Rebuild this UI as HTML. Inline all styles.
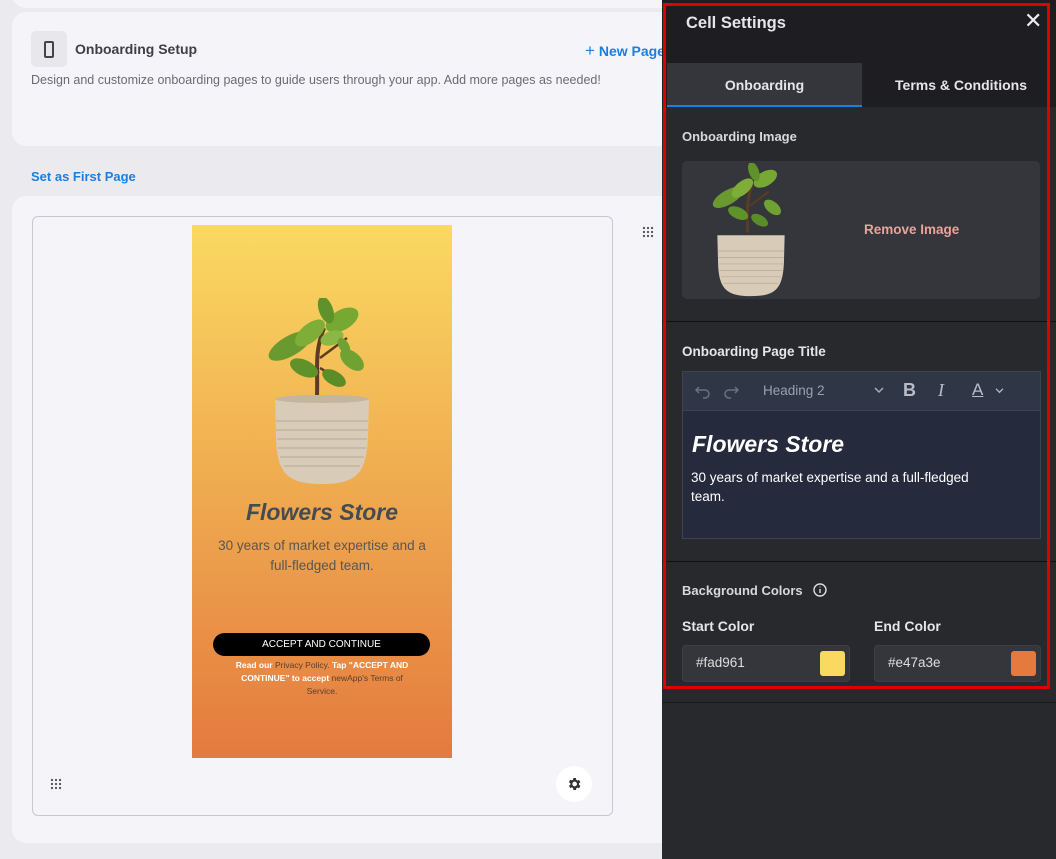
<!DOCTYPE html>
<html><head><meta charset="utf-8"><style>
*{box-sizing:border-box;margin:0;padding:0}
body{width:1056px;height:859px;overflow:hidden;background:#ebeaef;font-family:"Liberation Sans",sans-serif;position:relative}
.abs{position:absolute}
.card{position:absolute;background:#f5f4f9;border-radius:14px}
.panel{position:absolute;left:662px;top:0;width:394px;height:859px;background:#28292c}
.w{color:#e6e6e8;font-weight:bold}
</style></head><body>
<div class="card" style="left:12px;top:-20px;width:700px;height:28px"></div>
<div class="card" style="left:12px;top:12px;width:700px;height:134px"></div>
<div class="abs" style="left:31px;top:31px;width:36px;height:36px;background:#e8e7ec;border-radius:5px"></div>
<div class="abs" style="left:44px;top:41px;width:10px;height:17px;border:2px solid #444;border-radius:2px"></div>
<div class="abs" style="left:75px;top:41px;font-size:14px;font-weight:bold;color:#3e3e44">Onboarding Setup</div>
<div class="abs" style="left:585px;top:41px;font-size:14px;font-weight:bold;color:#1a7fe0"><span style="font-weight:normal;font-size:17px">+</span> New Page</div>
<div class="abs" style="left:31px;top:73px;font-size:12.5px;color:#6b6b72">Design and customize onboarding pages to guide users through your app. Add more pages as needed!</div>
<div class="abs" style="left:31px;top:169px;font-size:13px;font-weight:bold;color:#1a7fe0">Set as First Page</div>
<div class="card" style="left:12px;top:196px;width:700px;height:647px"></div>
<div class="abs" style="left:32px;top:216px;width:581px;height:600px;border:1px solid #c9c8cf;border-radius:6px;background:#f5f4f9"></div>
<div class="abs" style="left:642px;top:226px;width:12px;height:12px;background:radial-gradient(circle,#555 1px,transparent 1.3px) 0 0/4px 4px"></div>
<div class="abs" style="left:50px;top:778px;width:12px;height:12px;background:radial-gradient(circle,#555 1px,transparent 1.3px) 0 0/4px 4px"></div>
<div class="abs" style="left:556px;top:766px;width:36px;height:36px;border-radius:50%;background:#fff"></div>
<svg class="abs" style="left:566px;top:776px" width="16" height="16" viewBox="0 0 24 24"><path fill="#333" d="M19.4 13a7.5 7.5 0 0 0 0-2l2.1-1.6-2-3.5-2.5 1a7.6 7.6 0 0 0-1.7-1L15 3h-4l-.4 2.6a7.6 7.6 0 0 0-1.7 1l-2.5-1-2 3.5L6.6 11a7.5 7.5 0 0 0 0 2l-2.1 1.6 2 3.5 2.5-1a7.6 7.6 0 0 0 1.7 1L11 21h4l.4-2.6a7.6 7.6 0 0 0 1.7-1l2.5 1 2-3.5zM13 15.5a3.5 3.5 0 1 1 0-7 3.5 3.5 0 0 1 0 7z"/></svg>
<!-- phone -->
<div class="abs" style="left:192px;top:225px;width:260px;height:533px;background:linear-gradient(#fad961,#e47a3e);text-align:center">
<svg class="abs" style="left:70px;top:73px" width="120" height="190" viewBox="0 0 120 190">
<path d="M55 97 C56 70 52 55 62 30" stroke="#5a3d22" stroke-width="4" fill="none"/>
<path d="M58 60 L85 40M57 75 L40 62M58 70 L78 82" stroke="#5a3d22" stroke-width="2.5"/>
<ellipse cx="28" cy="48" rx="24" ry="10" transform="rotate(-30 28 48)" fill="#6a9a2f"/>
<ellipse cx="48" cy="35" rx="18" ry="9" transform="rotate(-40 48 35)" fill="#7fae38"/>
<ellipse cx="80" cy="22" rx="18" ry="10" transform="rotate(-30 80 22)" fill="#76a832"/>
<ellipse cx="64" cy="12" rx="7" ry="14" transform="rotate(-20 64 12)" fill="#5f922a"/>
<ellipse cx="70" cy="40" rx="12" ry="7" transform="rotate(-20 70 40)" fill="#8bb845"/>
<ellipse cx="42" cy="70" rx="15" ry="8" transform="rotate(25 42 70)" fill="#5f922a"/>
<ellipse cx="90" cy="62" rx="14" ry="8" transform="rotate(40 90 62)" fill="#6fa233"/>
<ellipse cx="72" cy="80" rx="13" ry="7" transform="rotate(30 72 80)" fill="#5a8c28"/>
<ellipse cx="82" cy="48" rx="5" ry="9" transform="rotate(-30 82 48)" fill="#6fa233"/>
<path d="M13 101 L107 101 L106 140 C104 175 95 186 60 186 C25 186 15 175 14 140 Z" fill="#d8cbb8"/>
<ellipse cx="60" cy="101" rx="47" ry="4" fill="#c4b59f"/>
<g stroke="#b8a990" stroke-width="1" fill="none"><path d="M14 123H106M14 132H106M15 141H105M16 150H104M18 159H102M22 168H98"/></g>
</svg>
<div class="abs" style="left:0;width:260px;top:274px;font-size:23px;font-weight:bold;font-style:italic;color:#444b52">Flowers Store</div>
<div class="abs" style="left:15px;width:230px;top:311px;font-size:13.5px;line-height:20px;color:#5a5550">30 years of market expertise and a full-fledged team.</div>
<div class="abs" style="left:21px;top:408px;width:217px;height:23px;background:#000;border-radius:12px;color:#fff;font-size:10px;line-height:23px">ACCEPT AND CONTINUE</div>
<div class="abs" style="left:35px;width:190px;top:434px;font-size:8.5px;line-height:13px;color:#5a4030"><b style="color:#fff">Read our</b> Privacy Policy. <b style="color:#fff">Tap "ACCEPT AND CONTINUE" to accept</b> newApp's Terms of Service.</div>
</div>
<!-- panel -->
<div class="panel">
<div class="abs" style="left:0;top:0;width:394px;height:107px;background:#1e1e22"></div>
<div class="abs w" style="left:24px;top:14px;font-size:16.5px">Cell Settings</div>
<div class="abs" style="left:362px;top:8px;font-size:22px;color:#eee">✕</div>
<div class="abs" style="left:5px;top:63px;width:195px;height:44px;background:#34363b;border-bottom:2px solid #1a7fe0"></div>
<div class="abs w" style="left:5px;width:195px;top:77px;text-align:center;font-size:14px">Onboarding</div>
<div class="abs w" style="left:200px;width:198px;top:77px;text-align:center;font-size:14px">Terms &amp; Conditions</div>
<div class="abs w" style="left:20px;top:129px;font-size:13px;color:#d8d8da">Onboarding Image</div>
<div class="abs" style="left:20px;top:161px;width:358px;height:138px;background:#35363b;border-radius:5px"></div>
<svg class="abs" style="left:44px;top:163px" width="90" height="136" viewBox="0 0 120 190">
<path d="M55 97 C56 70 52 55 62 30" stroke="#5a3d22" stroke-width="4" fill="none"/>
<path d="M58 60 L85 40M57 75 L40 62" stroke="#5a3d22" stroke-width="2.5"/>
<ellipse cx="28" cy="48" rx="24" ry="10" transform="rotate(-30 28 48)" fill="#6a9a2f"/>
<ellipse cx="48" cy="35" rx="18" ry="9" transform="rotate(-40 48 35)" fill="#7fae38"/>
<ellipse cx="80" cy="22" rx="18" ry="10" transform="rotate(-30 80 22)" fill="#76a832"/>
<ellipse cx="64" cy="12" rx="7" ry="14" transform="rotate(-20 64 12)" fill="#5f922a"/>
<ellipse cx="42" cy="70" rx="15" ry="8" transform="rotate(25 42 70)" fill="#5f922a"/>
<ellipse cx="90" cy="62" rx="14" ry="8" transform="rotate(40 90 62)" fill="#6fa233"/>
<ellipse cx="72" cy="80" rx="13" ry="7" transform="rotate(30 72 80)" fill="#5a8c28"/>
<path d="M13 101 L107 101 L106 140 C104 175 95 186 60 186 C25 186 15 175 14 140 Z" fill="#d8cbb8"/>
<g stroke="#b8a990" stroke-width="1" fill="none"><path d="M14 123H106M14 132H106M15 141H105M16 150H104M18 159H102M22 168H98"/></g>
</svg>
<div class="abs" style="left:202px;top:222px;font-size:13.5px;font-weight:bold;color:#e8a49a">Remove Image</div>
<div class="abs" style="left:0;top:321px;width:394px;height:1px;background:#111"></div>
<div class="abs w" style="left:20px;top:344px;font-size:13.5px">Onboarding Page Title</div>
<div class="abs" style="left:20px;top:371px;width:359px;height:168px;border:1px solid #3d4354;background:#252b3d"></div>
<div class="abs" style="left:21px;top:372px;width:357px;height:39px;background:#2f3747;border-bottom:1px solid #3d4354"></div>
<svg class="abs" style="left:32px;top:383px" width="50" height="16" viewBox="0 0 50 16" fill="none" stroke="#6a7080" stroke-width="1.5"><path d="M5 4L2 7l3 3M2 7h9a4 4 0 0 1 0 8H9"/><path d="M41 4l3 3-3 3M44 7h-9a4 4 0 0 0 0 8h2"/></svg>
<div class="abs" style="left:101px;top:383px;font-size:13.5px;color:#9aa0ad">Heading 2</div>
<svg class="abs" style="left:212px;top:387px" width="10" height="7" viewBox="0 0 10 7" fill="none" stroke="#aab" stroke-width="1.5"><path d="M1 1l4 4 4-4"/></svg>
<div class="abs" style="left:241px;top:380px;font-size:18px;font-weight:bold;color:#b8bcc8">B</div>
<div class="abs" style="left:276px;top:380px;font-size:18px;font-style:italic;font-family:'Liberation Serif',serif;color:#b8bcc8">I</div>
<div class="abs" style="left:310px;top:380px;font-size:17px;color:#b8bcc8;text-decoration:underline">A</div>
<svg class="abs" style="left:333px;top:388px" width="9" height="6" viewBox="0 0 10 7" fill="none" stroke="#b8bcc8" stroke-width="1.5"><path d="M1 1l4 4 4-4"/></svg>
<div class="abs" style="left:30px;top:431px;font-size:23px;font-weight:bold;font-style:italic;color:#fff">Flowers Store</div>
<div class="abs" style="left:29px;top:468px;width:312px;font-size:13.5px;line-height:19px;color:#fff">30 years of market expertise and a full-fledged team.</div>
<div class="abs" style="left:0;top:561px;width:394px;height:1px;background:#111"></div>
<div class="abs w" style="left:20px;top:583px;font-size:13px;color:#d8d8da">Background Colors</div>
<svg class="abs" style="left:151px;top:583px" width="14" height="14" viewBox="0 0 14 14" fill="none" stroke="#ddd" stroke-width="1.4"><circle cx="7" cy="7" r="6"/><path d="M7 6v4M7 3.6v.8"/></svg>
<div class="abs w" style="left:20px;top:618px;font-size:14px">Start Color</div>
<div class="abs w" style="left:212px;top:618px;font-size:14px">End Color</div>
<div class="abs" style="left:20px;top:645px;width:168px;height:37px;background:#35363b;border:1px solid #3e3f44;border-radius:4px"></div>
<div class="abs" style="left:34px;top:655px;font-size:13.5px;color:#ddd">#fad961</div>
<div class="abs" style="left:158px;top:651px;width:25px;height:25px;background:#fad961;border-radius:3px"></div>
<div class="abs" style="left:212px;top:645px;width:167px;height:37px;background:#35363b;border:1px solid #3e3f44;border-radius:4px"></div>
<div class="abs" style="left:226px;top:655px;font-size:13.5px;color:#ddd">#e47a3e</div>
<div class="abs" style="left:349px;top:651px;width:25px;height:25px;background:#e47a3e;border-radius:3px"></div>
<div class="abs" style="left:0;top:702px;width:394px;height:1px;background:#1a1a1c"></div>
<div class="abs" style="left:1px;top:3px;width:387px;height:686px;border:3px solid #e00000"></div>
</div>
</body></html>
